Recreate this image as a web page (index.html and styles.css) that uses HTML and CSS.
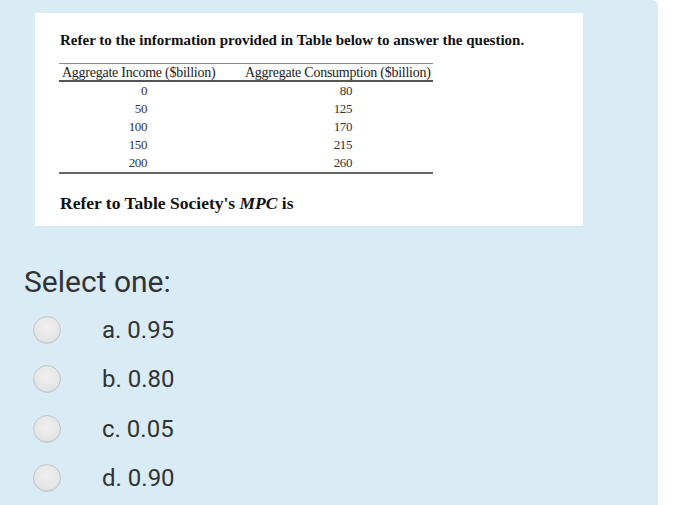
FILE: index.html
```html
<!DOCTYPE html>
<html>
<head>
<meta charset="utf-8">
<link rel="stylesheet" href="styles.css">
</head>
<body>
<div class="panel">
  <div class="figure">
    <p class="intro">Refer to the information provided in Table below to answer the question.</p>
    <div class="tbl">
      <div class="row head">
        <div class="c1">Aggregate Income ($billion)</div>
        <div class="c2">Aggregate Consumption ($billion)</div>
      </div>
      <div class="row"><div class="c1 num">0</div><div class="c2 num">80</div></div>
      <div class="row"><div class="c1 num">50</div><div class="c2 num">125</div></div>
      <div class="row"><div class="c1 num">100</div><div class="c2 num">170</div></div>
      <div class="row"><div class="c1 num">150</div><div class="c2 num">215</div></div>
      <div class="row last"><div class="c1 num">200</div><div class="c2 num">260</div></div>
    </div>
    <p class="question">Refer to Table Society's <i>MPC</i> is</p>
  </div>
  <div class="prompt">Select one:</div>
  <div class="options">
    <label class="opt"><span class="radio"></span><span class="txt">a. 0.95</span></label>
    <label class="opt"><span class="radio"></span><span class="txt">b. 0.80</span></label>
    <label class="opt"><span class="radio"></span><span class="txt">c. 0.05</span></label>
    <label class="opt"><span class="radio"></span><span class="txt">d. 0.90</span></label>
  </div>
</div>
</body>
</html>
```
FILE: styles.css
```css
html, body {
  margin: 0;
  padding: 0;
  background: #ffffff;
}
body {
  width: 676px;
  height: 505px;
  overflow: hidden;
}
.panel {
  width: 658px;
  height: 520px;
  background: #d9ecf5;
  border-top-right-radius: 6px;
  padding-top: 13px;
  box-sizing: border-box;
}
.figure {
  margin-left: 35px;
  width: 548px;
  height: 213px;
  background: #ffffff;
  box-sizing: border-box;
  padding: 19px 0 0 25px;
  font-family: "Liberation Serif", "Times New Roman", serif;
  color: #111;
}
.intro {
  margin: 0;
  font-weight: bold;
  font-size: 15px;
  line-height: 16px;
}
.tbl {
  margin-top: 15px;
  margin-left: -1px;
  width: 374px;
  border-top: 1px solid #8a8a8a;
  color: #222;
  font-family: "Liberation Serif", "Times New Roman", serif;
}
.row {
  display: grid;
  grid-template-columns: 166px 208px;
  height: 18px;
  line-height: 18px;
}
.row.head {
  height: 16px;
  line-height: 18px;
  font-size: 14px;
  border-bottom: 2px solid #555;
  letter-spacing: -0.25px;
}
.row.head .c1 { padding-left: 3px; }
.row.head .c2 { padding-left: 20px; }
.row.last {
  border-bottom: 2px solid #666;
}
.num {
  text-align: right;
  color: #333;
  font-size: 13px;
  letter-spacing: -0.4px;
}
.c1.num { padding-right: 78px; }
.c2.num { padding-right: 81px; }
.question {
  margin: 19px 0 0 0;
  font-weight: bold;
  font-size: 17.5px;
  line-height: 20px;
}
.prompt {
  margin-top: 38px;
  padding-left: 24px;
  font-family: Roboto, "Noto Sans", sans-serif;
  font-size: 30px;
  line-height: 36px;
  color: #333;
}
.options {
  margin-top: 5px;
  display: flex;
  flex-direction: column;
  font-family: Roboto, "Noto Sans", sans-serif;
}
.opt {
  display: flex;
  align-items: center;
  height: 49.5px;
  padding-left: 33px;
}
.radio {
  width: 28px;
  height: 28px;
  box-sizing: border-box;
  border-radius: 50%;
  border: 1px solid #c4c6c8;
  background: radial-gradient(circle at 50% 40%, #f0f0f0 0%, #e4e4e4 70%, #d6d6d6 100%);
  box-shadow: inset 0 -1px 1px rgba(0,0,0,0.06);
  flex: none;
}
.txt {
  margin-left: 41px;
  font-size: 24px;
  line-height: 28px;
  color: #333;
}
```
